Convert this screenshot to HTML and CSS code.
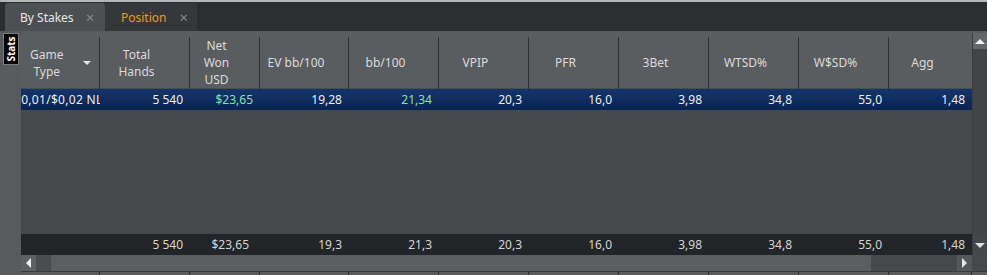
FILE: index.html
```html
<!DOCTYPE html>
<html lang="en">
<head>
    <meta charset="UTF-8">
    <title>Stats</title>
    <link rel="stylesheet" href="styles.css">
</head>
<body>
    <div class="topline"></div>
    <div class="tabs">
        <div class="tab active">By Stakes <span class="x">×</span></div>
        <div class="tab">Position <span class="x">×</span></div>
    </div>
    <div class="panel">
        <div class="side"><div class="stats-tab"><span>Stats</span></div></div>
        <div class="main">
            <div class="body">
                <div class="grid">
                    <div class="head cols">
                        <div class="hc first"><span>Game<br>Type</span><i class="tri"></i></div>
                        <div class="hc">Total<br>Hands</div>
                        <div class="hc">Net<br>Won<br>USD</div>
                        <div class="hc">EV bb/100</div>
                        <div class="hc">bb/100</div>
                        <div class="hc">VPIP</div>
                        <div class="hc">PFR</div>
                        <div class="hc">3Bet</div>
                        <div class="hc">WTSD%</div>
                        <div class="hc">W$SD%</div>
                        <div class="hc last">Agg</div>
                    </div>
                    <div class="row sel cols">
                        <div class="c stake"><span>$0,01/$0,02 NL</span></div>
                        <div class="c">5 540</div>
                        <div class="c green">$23,65</div>
                        <div class="c">19,28</div>
                        <div class="c green">21,34</div>
                        <div class="c">20,3</div>
                        <div class="c">16,0</div>
                        <div class="c">3,98</div>
                        <div class="c">34,8</div>
                        <div class="c">55,0</div>
                        <div class="c">1,48</div>
                    </div>
                    <div class="empty"></div>
                    <div class="row foot cols">
                        <div class="c"></div>
                        <div class="c">5 540</div>
                        <div class="c">$23,65</div>
                        <div class="c">19,3</div>
                        <div class="c">21,3</div>
                        <div class="c">20,3</div>
                        <div class="c">16,0</div>
                        <div class="c">3,98</div>
                        <div class="c">34,8</div>
                        <div class="c">55,0</div>
                        <div class="c">1,48</div>
                    </div>
                </div>
                <div class="vscroll">
                    <div class="vbtn up"><i class="arr-up"></i></div>
                    <div class="vtrack"></div>
                    <div class="vbtn down"><i class="arr-down"></i></div>
                </div>
            </div>
            <div class="hscroll">
                <div class="hbtn left"><i class="arr-left"></i></div>
                <div class="hgap"></div>
                <div class="thumb"></div>
                <div class="htrack"></div>
                <div class="hbtn right"><i class="arr-right"></i></div>
                <div class="corner"></div>
            </div>
            <div class="under cols">
                <div></div><div></div><div></div><div></div><div></div><div></div><div></div><div></div><div></div><div></div><div></div>
            </div>
        </div>
    </div>
</body>
</html>
```

FILE: styles.css
```css
body { margin: 0; background: #2c2e31; font-family: "Noto Sans", "Open Sans", sans-serif; font-size: 12px; color: #dcdcdc; width: 987px; height: 275px; overflow: hidden; }
.topline { height: 2px; background: #b4b7ba; }
.tabs { display: flex; height: 29px; padding: 1px 0 0 5px; background: #2b2d30; box-sizing: border-box; align-items: flex-end; }
.tab { height: 28px; width: 92px; display: flex; align-items: center; padding-left: 16px; box-sizing: border-box; background: #35383b; color: #e59a2a; font-size: 12px; }
.tab.active { width: 100px; background: #4d5053; color: #e6e6e6; border-radius: 3px 3px 0 0; padding-left: 15px; }
.tab .x { color: #85888b; font-size: 15px; margin-left: 13px; }
.tab.active .x { margin-left: 12px; }

.panel { display: flex; height: 244px; background: #46494c; }
.side { width: 21px; background: #585b5e; padding-top: 2px; box-sizing: border-box; }
.stats-tab { width: 16px; height: 32px; margin-left: 3px; background: #050505; border: 1px solid #7a7d80; box-sizing: border-box; display: flex; align-items: center; justify-content: center; }
.stats-tab span { transform: rotate(-90deg); color: #ffffff; font-size: 10px; font-weight: bold; white-space: nowrap; }

.main { width: 966px; display: flex; flex-direction: column; }
.body { display: flex; height: 224px; background: #595c5f; padding-top: 2px; box-sizing: border-box; }
.grid { width: 951px; display: flex; flex-direction: column; }
.cols { display: grid; grid-template-columns: 79px 90px 70px 89px 90px 90px 90px 90px 90px 90px 83px; }

.head { height: 56px; background: #5a5d60; border-bottom: 1px solid #4a4d50; box-sizing: border-box; }
.hc { margin: 4px 0 2px; border-right: 1px solid #2f3134; display: flex; align-items: center; justify-content: center; text-align: center; padding-right: 16px; padding-bottom: 2px; line-height: 17px; color: #dadada; }
.hc.first { justify-content: space-between; padding: 0 8px 2px 9px; text-align: center; }
.hc.last { border-right: none; }
.tri { width: 0; height: 0; border-left: 4px solid transparent; border-right: 4px solid transparent; border-top: 4px solid #e6e6e6; }

.row { height: 21px; align-items: center; }
.c { text-align: right; padding-right: 7px; white-space: nowrap; line-height: 21px; }
.sel { background: linear-gradient(#14356b, #092452); color: #eeeeee; }
.green { color: #86e2a4; }
.stake { overflow: hidden; padding: 0; text-align: left; }
.stake span { display: inline-block; margin-left: -7px; letter-spacing: 0.3px; }
.empty { flex: 1; background: #46494c; }
.foot { background: #222528; color: #d4d4d4; }
.foot .c:nth-child(3) { padding-right: 11px; }

.vscroll { width: 15px; display: flex; flex-direction: column; background: #424548; border-left: 1px solid #3a3d40; box-sizing: border-box; }
.vbtn { height: 16px; display: flex; align-items: center; justify-content: center; background: #64676a; }
.vbtn.down { height: 20px; background: #45484b; }
.vtrack { flex: 1; }
.arr-up { border-left: 5px solid transparent; border-right: 5px solid transparent; border-bottom: 5px solid #f0f0f0; }
.arr-down { border-left: 5px solid transparent; border-right: 5px solid transparent; border-top: 5px solid #e0e0e0; }

.hscroll { display: flex; height: 16px; background: #46494c; }
.hbtn { width: 15px; display: flex; align-items: center; justify-content: center; background: #5e6164; }
.hbtn.right { background: #55585b; }
.hgap { width: 15px; background: #4a4d50; }
.thumb { width: 820px; background: #5b5e61; }
.htrack { width: 86px; background: #46494c; }
.corner { flex: 1; background: #46494c; }
.arr-left { border-top: 5px solid transparent; border-bottom: 5px solid transparent; border-right: 5px solid #f0f0f0; }
.arr-right { border-top: 5px solid transparent; border-bottom: 5px solid transparent; border-left: 5px solid #e6e6e6; }

.under { height: 4px; background: #5a5d60; border-top: 1px solid #37393c; box-sizing: border-box; }
.under div { border-right: 1px solid #2f3134; }
```
